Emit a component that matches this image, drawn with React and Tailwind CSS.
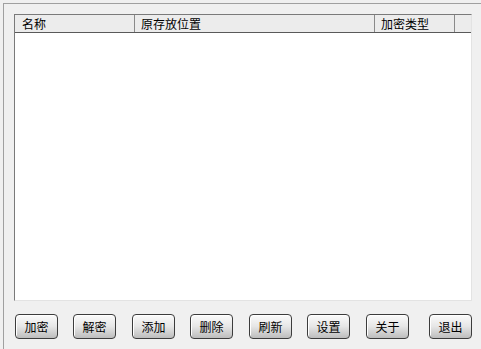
import React from "react";

const buttons = [
  { t: "加密", ml: "ml-0" },
  { t: "解密", ml: "ml-[15px]" },
  { t: "添加", ml: "ml-[16px]" },
  { t: "删除", ml: "ml-[15px]" },
  { t: "刷新", ml: "ml-[16px]" },
  { t: "设置", ml: "ml-[15px]" },
  { t: "关于", ml: "ml-[16px]" },
  { t: "退出", ml: "ml-[20px]" },
];

const font = { fontFamily: '"Noto Sans CJK SC", "Liberation Sans", sans-serif' };

export default function App() {
  return (
    <div
      className="w-[481px] h-[349px] bg-[#f0f0f0] overflow-hidden text-[12px] leading-none text-black"
      style={font}
    >
      <div className="mt-[3px] ml-[3px] h-[346px] border-t border-l border-[#a0a0a0] pl-[10px] pt-[10px]">
        <div className="w-[458px] h-[287px] border-t border-l border-[#7a7a7a] border-r border-b border-r-[#e3e3e3] border-b-[#e3e3e3] bg-white flex flex-col">
          <div className="h-[18px] flex bg-[#ececec] border-b border-[#5a5a5a]">
            <div className="w-[120px] h-full border-r border-[#8a8a8a] pl-[7px] flex items-center">名称</div>
            <div className="w-[240px] h-full border-r border-[#8a8a8a] pl-[6px] flex items-center">原存放位置</div>
            <div className="w-[80px] h-full border-r border-[#8a8a8a] pl-[6px] flex items-center">加密类型</div>
            <div className="flex-1 h-full" />
          </div>
          <div className="flex-1" />
        </div>
        <div className="mt-[13px] flex pl-[1px]">
          {buttons.map((b) => (
            <div
              key={b.t}
              className={`${b.ml} w-[43px] h-[25px] rounded-[4px] border border-[#3c3c3c] bg-gradient-to-b from-[#fbfbfb] via-[#e6e6e6] to-[#bdbdbd] flex items-center justify-center shadow-[inset_1px_1px_0_#ffffff]`}
            >
              {b.t}
            </div>
          ))}
        </div>
      </div>
    </div>
  );
}
